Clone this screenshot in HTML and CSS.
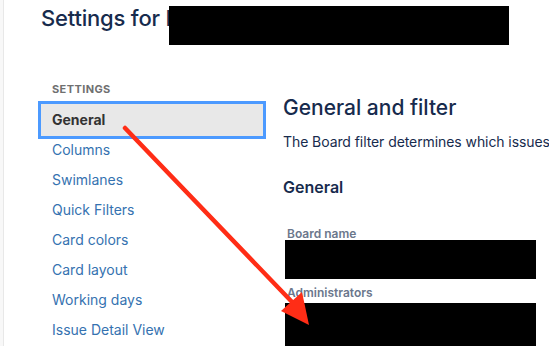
FILE: index.html
```html
<!DOCTYPE html>
<html lang="en">
<head>
<meta charset="utf-8">
<title>Settings</title>
<link rel="stylesheet" href="styles.css">
</head>
<body>
<div class="shell">
  <header class="head">
    <h1 class="title"><span class="title-text">Settings for I</span><span class="redact redact-title"></span></h1>
  </header>
  <div class="layout">
    <nav class="side">
      <div class="side-label">SETTINGS</div>
      <ul class="nav">
        <li class="nav-item is-active">General</li>
        <li class="nav-item">Columns</li>
        <li class="nav-item">Swimlanes</li>
        <li class="nav-item">Quick Filters</li>
        <li class="nav-item">Card colors</li>
        <li class="nav-item">Card layout</li>
        <li class="nav-item">Working days</li>
        <li class="nav-item">Issue Detail View</li>
      </ul>
    </nav>
    <main class="main">
      <h2 class="page-title">General and filter</h2>
      <p class="desc">The Board filter determines which issues appear on the board.</p>
      <h3 class="section-title">General</h3>
      <div class="field">
        <div class="field-label">Board name</div>
        <div class="redact redact-field"></div>
      </div>
      <div class="field field-admin">
        <div class="field-label">Administrators</div>
        <div class="redact redact-field redact-tall"></div>
      </div>
    </main>
  </div>
</div>
<svg class="annot" width="549" height="346" viewBox="0 0 549 346" aria-hidden="true">
  <line x1="125" y1="128" x2="293" y2="303" stroke="#ff2d16" stroke-width="4.5" stroke-linecap="round"/>
  <polygon points="302,292 281,311 309,325" fill="#ff2d16"/>
</svg>
</body>
</html>
```

FILE: styles.css
```css
html, body {
  margin: 0;
  padding: 0;
}
body {
  background: #f8f8f8;
  width: 549px;
  height: 346px;
  overflow: hidden;
  position: relative;
  font-family: Inter, "Liberation Sans", sans-serif;
  color: #172b4d;
}
.shell {
  margin-left: 3px;
  border-left: 1px solid #e8e8e8;
  background: #ffffff;
  height: 346px;
  overflow: hidden;
}
.head {
  height: 81px;
  padding-left: 37px;
  box-sizing: border-box;
}
.title {
  margin: 0;
  display: flex;
  align-items: flex-start;
  font-size: 22px;
  font-weight: 500;
  color: #172b4d;
  letter-spacing: -0.2px;
}
.title-text {
  margin-top: 5px;
  line-height: 26px;
  white-space: nowrap;
}
.redact {
  background: #000000;
}
.redact-title {
  display: block;
  margin-top: 6px;
  margin-left: -2px;
  width: 340px;
  height: 39px;
  flex: none;
}
.layout {
  display: flex;
  padding-left: 38px;
  gap: 21px;
}
.side {
  width: 220px;
  flex: none;
}
.side-label {
  font-size: 11px;
  line-height: 16px;
  font-weight: 700;
  color: #707070;
  padding-left: 10px;
  margin-bottom: 8px;
  letter-spacing: 0.4px;
}
.nav {
  list-style: none;
  margin: 0;
  padding: 0;
}
.nav-item {
  height: 30px;
  line-height: 30px;
  padding-left: 10px;
  font-size: 14px;
  color: #3572b0;
}
.nav-item.is-active {
  background: #e8e8e8;
  color: #333333;
  font-weight: 700;
  box-shadow: 0 0 0 1px #e8e8e8, 0 0 0 4px #4c9aff;
}
.main {
  flex: 1;
  min-width: 0;
}
.page-title {
  margin: 13px 0 0;
  font-size: 21px;
  line-height: 28px;
  font-weight: 500;
  white-space: nowrap;
}
.desc {
  margin: 10px 0 0;
  font-size: 14px;
  line-height: 20px;
  white-space: nowrap;
  letter-spacing: -0.08px;
}
.section-title {
  margin: 25px 0 0;
  font-size: 16px;
  line-height: 20px;
  font-weight: 600;
}
.field {
  margin-top: 30px;
}
.field-admin {
  margin-top: 7px;
}
.field-label {
  font-size: 12px;
  line-height: 13px;
  font-weight: 600;
  color: #6b778c;
  padding-left: 4px;
}
.redact-field {
  margin-left: 2px;
  width: 251px;
  height: 39px;
}
.field-admin .redact-field {
  margin-top: 4px;
  height: 50px;
}
.annot {
  position: absolute;
  left: 0;
  top: 0;
  pointer-events: none;
}
```
